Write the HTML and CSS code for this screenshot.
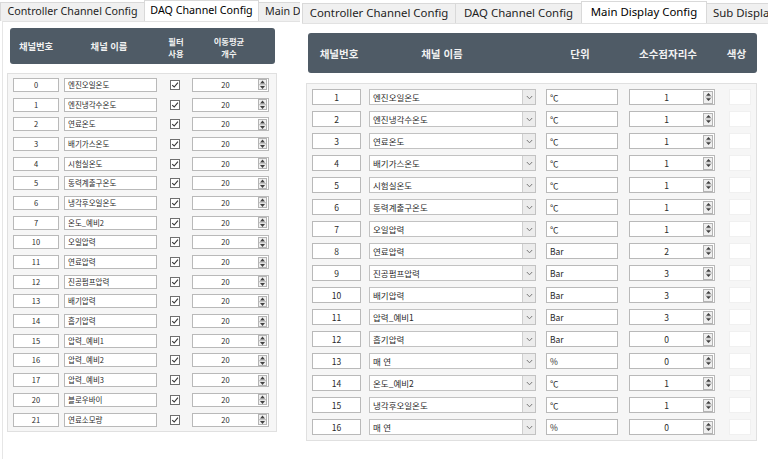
FILE: index.html
```html
<!DOCTYPE html>
<html lang="ko">
<head>
<meta charset="utf-8">
<title>Channel Config</title>
<link rel="stylesheet" href="styles.css">
</head>
<body>
<div class="screen">
  <!-- LEFT: DAQ Channel Config -->
  <section class="panel panel-l">
    <div class="tabs tabs-l">
      <div class="tab tab-l1">Controller Channel Config</div>
      <div class="tab sel tab-l2">DAQ Channel Config</div>
      <div class="tab tab-l3">Main D</div>
    </div>
    <div class="pane pane-l">
      <div class="head head-l">
        <div>채널번호</div>
        <div>채널 이름</div>
        <div class="two">필터<br>사용</div>
        <div class="two">이동평균<br>개수</div>
      </div>
      <div class="table table-l">
        <div class="lrow"><div class="box num-l">0</div><div class="box name-l">엔진오일온도</div><div class="chk-cell"><span class="chk"></span></div><div class="box spin spin-l"><span class="val">20</span><span class="spb"></span></div></div>
        <div class="lrow"><div class="box num-l">1</div><div class="box name-l">엔진냉각수온도</div><div class="chk-cell"><span class="chk"></span></div><div class="box spin spin-l"><span class="val">20</span><span class="spb"></span></div></div>
        <div class="lrow"><div class="box num-l">2</div><div class="box name-l">연료온도</div><div class="chk-cell"><span class="chk"></span></div><div class="box spin spin-l"><span class="val">20</span><span class="spb"></span></div></div>
        <div class="lrow"><div class="box num-l">3</div><div class="box name-l">배기가스온도</div><div class="chk-cell"><span class="chk"></span></div><div class="box spin spin-l"><span class="val">20</span><span class="spb"></span></div></div>
        <div class="lrow"><div class="box num-l">4</div><div class="box name-l">시험실온도</div><div class="chk-cell"><span class="chk"></span></div><div class="box spin spin-l"><span class="val">20</span><span class="spb"></span></div></div>
        <div class="lrow"><div class="box num-l">5</div><div class="box name-l">동력계출구온도</div><div class="chk-cell"><span class="chk"></span></div><div class="box spin spin-l"><span class="val">20</span><span class="spb"></span></div></div>
        <div class="lrow"><div class="box num-l">6</div><div class="box name-l">냉각후오일온도</div><div class="chk-cell"><span class="chk"></span></div><div class="box spin spin-l"><span class="val">20</span><span class="spb"></span></div></div>
        <div class="lrow"><div class="box num-l">7</div><div class="box name-l">온도_예비2</div><div class="chk-cell"><span class="chk"></span></div><div class="box spin spin-l"><span class="val">20</span><span class="spb"></span></div></div>
        <div class="lrow"><div class="box num-l">10</div><div class="box name-l">오일압력</div><div class="chk-cell"><span class="chk"></span></div><div class="box spin spin-l"><span class="val">20</span><span class="spb"></span></div></div>
        <div class="lrow"><div class="box num-l">11</div><div class="box name-l">연료압력</div><div class="chk-cell"><span class="chk"></span></div><div class="box spin spin-l"><span class="val">20</span><span class="spb"></span></div></div>
        <div class="lrow"><div class="box num-l">12</div><div class="box name-l">진공펌프압력</div><div class="chk-cell"><span class="chk"></span></div><div class="box spin spin-l"><span class="val">20</span><span class="spb"></span></div></div>
        <div class="lrow"><div class="box num-l">13</div><div class="box name-l">배기압력</div><div class="chk-cell"><span class="chk"></span></div><div class="box spin spin-l"><span class="val">20</span><span class="spb"></span></div></div>
        <div class="lrow"><div class="box num-l">14</div><div class="box name-l">흡기압력</div><div class="chk-cell"><span class="chk"></span></div><div class="box spin spin-l"><span class="val">20</span><span class="spb"></span></div></div>
        <div class="lrow"><div class="box num-l">15</div><div class="box name-l">압력_예비1</div><div class="chk-cell"><span class="chk"></span></div><div class="box spin spin-l"><span class="val">20</span><span class="spb"></span></div></div>
        <div class="lrow"><div class="box num-l">16</div><div class="box name-l">압력_예비2</div><div class="chk-cell"><span class="chk"></span></div><div class="box spin spin-l"><span class="val">20</span><span class="spb"></span></div></div>
        <div class="lrow"><div class="box num-l">17</div><div class="box name-l">압력_예비3</div><div class="chk-cell"><span class="chk"></span></div><div class="box spin spin-l"><span class="val">20</span><span class="spb"></span></div></div>
        <div class="lrow"><div class="box num-l">20</div><div class="box name-l">블로우바이</div><div class="chk-cell"><span class="chk"></span></div><div class="box spin spin-l"><span class="val">20</span><span class="spb"></span></div></div>
        <div class="lrow"><div class="box num-l">21</div><div class="box name-l">연료소모량</div><div class="chk-cell"><span class="chk"></span></div><div class="box spin spin-l"><span class="val">20</span><span class="spb"></span></div></div>
      </div>
    </div>
  </section>

  <!-- RIGHT: Main Display Config -->
  <section class="panel panel-r">
    <div class="tabs tabs-r">
      <div class="tab tab-r1">Controller Channel Config</div>
      <div class="tab tab-r2">DAQ Channel Config</div>
      <div class="tab sel tab-r3">Main Display Config</div>
      <div class="tab tab-r4">Sub Displa</div>
    </div>
    <div class="pane pane-r">
      <div class="head head-r">
        <div>채널번호</div>
        <div>채널 이름</div>
        <div class="unit-h">단위</div>
        <div>소수점자리수</div>
        <div>색상</div>
      </div>
      <div class="table table-r">
        <div class="rrow"><div class="box num-r">1</div><div class="box combo"><span class="ctext">엔진오일온도</span><span class="dd"></span></div><div class="box unit">℃</div><div class="box spin spin-r"><span class="val">1</span><span class="spb"></span></div><div class="swatch"></div></div>
        <div class="rrow"><div class="box num-r">2</div><div class="box combo"><span class="ctext">엔진냉각수온도</span><span class="dd"></span></div><div class="box unit">℃</div><div class="box spin spin-r"><span class="val">1</span><span class="spb"></span></div><div class="swatch"></div></div>
        <div class="rrow"><div class="box num-r">3</div><div class="box combo"><span class="ctext">연료온도</span><span class="dd"></span></div><div class="box unit">℃</div><div class="box spin spin-r"><span class="val">1</span><span class="spb"></span></div><div class="swatch"></div></div>
        <div class="rrow"><div class="box num-r">4</div><div class="box combo"><span class="ctext">배기가스온도</span><span class="dd"></span></div><div class="box unit">℃</div><div class="box spin spin-r"><span class="val">1</span><span class="spb"></span></div><div class="swatch"></div></div>
        <div class="rrow"><div class="box num-r">5</div><div class="box combo"><span class="ctext">시험실온도</span><span class="dd"></span></div><div class="box unit">℃</div><div class="box spin spin-r"><span class="val">1</span><span class="spb"></span></div><div class="swatch"></div></div>
        <div class="rrow"><div class="box num-r">6</div><div class="box combo"><span class="ctext">동력계출구온도</span><span class="dd"></span></div><div class="box unit">℃</div><div class="box spin spin-r"><span class="val">1</span><span class="spb"></span></div><div class="swatch"></div></div>
        <div class="rrow"><div class="box num-r">7</div><div class="box combo"><span class="ctext">오일압력</span><span class="dd"></span></div><div class="box unit">℃</div><div class="box spin spin-r"><span class="val">1</span><span class="spb"></span></div><div class="swatch"></div></div>
        <div class="rrow"><div class="box num-r">8</div><div class="box combo"><span class="ctext">연료압력</span><span class="dd"></span></div><div class="box unit">Bar</div><div class="box spin spin-r"><span class="val">2</span><span class="spb"></span></div><div class="swatch"></div></div>
        <div class="rrow"><div class="box num-r">9</div><div class="box combo"><span class="ctext">진공펌프압력</span><span class="dd"></span></div><div class="box unit">Bar</div><div class="box spin spin-r"><span class="val">3</span><span class="spb"></span></div><div class="swatch"></div></div>
        <div class="rrow"><div class="box num-r">10</div><div class="box combo"><span class="ctext">배기압력</span><span class="dd"></span></div><div class="box unit">Bar</div><div class="box spin spin-r"><span class="val">3</span><span class="spb"></span></div><div class="swatch"></div></div>
        <div class="rrow"><div class="box num-r">11</div><div class="box combo"><span class="ctext">압력_예비1</span><span class="dd"></span></div><div class="box unit">Bar</div><div class="box spin spin-r"><span class="val">3</span><span class="spb"></span></div><div class="swatch"></div></div>
        <div class="rrow"><div class="box num-r">12</div><div class="box combo"><span class="ctext">흡기압력</span><span class="dd"></span></div><div class="box unit">Bar</div><div class="box spin spin-r"><span class="val">0</span><span class="spb"></span></div><div class="swatch"></div></div>
        <div class="rrow"><div class="box num-r">13</div><div class="box combo"><span class="ctext">매 연</span><span class="dd"></span></div><div class="box unit">%</div><div class="box spin spin-r"><span class="val">0</span><span class="spb"></span></div><div class="swatch"></div></div>
        <div class="rrow"><div class="box num-r">14</div><div class="box combo"><span class="ctext">온도_예비2</span><span class="dd"></span></div><div class="box unit">℃</div><div class="box spin spin-r"><span class="val">1</span><span class="spb"></span></div><div class="swatch"></div></div>
        <div class="rrow"><div class="box num-r">15</div><div class="box combo"><span class="ctext">냉각후오일온도</span><span class="dd"></span></div><div class="box unit">℃</div><div class="box spin spin-r"><span class="val">1</span><span class="spb"></span></div><div class="swatch"></div></div>
        <div class="rrow"><div class="box num-r">16</div><div class="box combo"><span class="ctext">매 연</span><span class="dd"></span></div><div class="box unit">%</div><div class="box spin spin-r"><span class="val">0</span><span class="spb"></span></div><div class="swatch"></div></div>
      </div>
    </div>
  </section>
</div>
</body>
</html>
```

FILE: styles.css
```css
html, body {
  margin: 0;
  padding: 0;
  background: #ffffff;
}
body {
  width: 768px;
  height: 459px;
  overflow: hidden;
  font-family: "Noto Sans", "Noto Sans CJK KR", sans-serif;
  color: #222;
}
.screen {
  display: flex;
  align-items: flex-start;
  height: 459px;
}
.panel {
  display: flex;
  flex-direction: column;
  overflow: hidden;
  height: 459px;
}
.panel-l { width: 300px; flex: none; }
.panel-r { width: 466px; flex: none; margin-left: 2px; }

/* ---------- tabs ---------- */
.tabs {
  display: flex;
  align-items: flex-end;
  flex: none;
  white-space: nowrap;
}
.tab {
  box-sizing: border-box;
  flex: none;
  background: #f0f0f0;
  border: 1px solid #d9d9d9;
  border-bottom: none;
  color: #1e1e1e;
  text-align: center;
  overflow: hidden;
}
.tab.sel {
  background: #ffffff;
  color: #000;
}
.tabs-l { height: 21px; font-size: 10.7px; }
.tabs-l .tab { height: 19px; line-height: 17px; }
.tabs-l .tab.sel { height: 21px; line-height: 19px; }
.tab-l1 { width: 145px; }
.tab-l2 { width: 115px; margin-left: -1px; }
.tab-l3 { width: 42px; margin-left: -1px; text-align: left; padding-left: 6px; border-right: none; }

.tabs-r { height: 23px; font-size: 11.4px; }
.tabs-r .tab { height: 20px; line-height: 18px; }
.tabs-r .tab.sel { height: 22px; line-height: 20px; }
.tab-r1 { width: 154px; }
.tab-r2 { width: 127px; margin-left: -1px; }
.tab-r3 { width: 126px; margin-left: -1px; }
.tab-r4 { width: 62px; margin-left: -1px; text-align: left; padding-left: 6px; border-right: none; }

/* ---------- panes ---------- */
.pane {
  flex: 1;
  box-sizing: border-box;
  border-top: 1px solid #e2e2e2;
  font-family: "Noto Sans CJK KR", "Noto Sans", sans-serif;
}
.pane-l {
  margin-left: 2px;
  border-left: 1px solid #e6e6e6;
  padding-top: 6px;
}
.pane-r {
  padding-top: 9px;
}

/* header bars */
.head {
  display: grid;
  align-items: center;
  background: #4f5b66;
  color: #f2f2f2;
  font-weight: bold;
  border-radius: 3px;
  text-align: center;
}
.head-l {
  margin-left: 7px;
  width: 265px;
  height: 36px;
  font-size: 9.3px;
  line-height: 14px;
  grid-template-columns: 52px 94px 40px 66px 1fr;
}
.head-l .two { font-size: 8.3px; line-height: 12px; padding-top: 1px; }
.head-r {
  margin-left: 6px;
  width: 449px;
  height: 40px;
  font-size: 10.5px;
  grid-template-columns: 62px 144px 106px 96px 1fr;
}
.head-r .unit-h { padding-left: 26px; box-sizing: border-box; }

/* tables */
.table {
  box-sizing: border-box;
  border: 1px solid #e0e0e0;
  background: #f6f6f6;
}
.table-l {
  margin-left: 4px;
  margin-top: 9px;
  width: 270px;
  padding: 1px 0 2px;
}
.table-r {
  margin-left: 4px;
  margin-top: 10px;
  width: 451px;
  padding: 2px 0;
}

.box {
  box-sizing: border-box;
  flex: none;
  background: #fff;
  border: 1px solid #b9b9b9;
  color: #2a2a2a;
  white-space: nowrap;
  overflow: hidden;
}

/* left rows */
.lrow {
  display: flex;
  align-items: center;
  height: 19.7px;
  padding-left: 5px;
  font-size: 7.5px;
}
.lrow .box { height: 14px; line-height: 12px; }
.num-l { width: 46px; text-align: center; }
.name-l { width: 93px; margin-left: 5px; padding-left: 3px; }
.chk-cell {
  width: 35px;
  flex: none;
  display: flex;
  justify-content: center;
}
.chk {
  display: block;
  width: 10px;
  height: 10px;
  box-sizing: border-box;
  border: 1px solid #6f6f6f;
  background: #fff url("data:image/svg+xml;utf8,<svg xmlns='http://www.w3.org/2000/svg' width='8' height='8' viewBox='0 0 8 8'><path d='M1.2 4.1 L3.2 6 L6.9 1.6' fill='none' stroke='%23333' stroke-width='1.1'/></svg>") center / 8px 8px no-repeat;
}
.spin {
  display: flex;
  align-items: center;
}
.spin .val {
  flex: 1;
  text-align: center;
}
.spin .spb {
  flex: none;
  box-sizing: border-box;
  border: 1px solid #b4b4b4;
  background: #f0f0f0 url("data:image/svg+xml;utf8,<svg xmlns='http://www.w3.org/2000/svg' width='7' height='10' viewBox='0 0 7 10'><path d='M3.5 1 L6 3.8 H1Z' fill='%23404040'/><path d='M0 5 H7' stroke='%23b4b4b4' stroke-width='1'/><path d='M1 6.2 H6 L3.5 9Z' fill='%23404040'/></svg>") center / 7px 10px no-repeat;
}
.spin-l { width: 77px; }
.spin-l .spb { width: 9px; height: 11px; margin-right: 1px; }

/* right rows */
.rrow {
  display: flex;
  align-items: center;
  height: 22px;
  padding-left: 5px;
  font-size: 8.5px;
}
.rrow .box { height: 16px; line-height: 14px; }
.num-r { width: 49px; text-align: center; }
.combo {
  width: 167px;
  margin-left: 8px;
  display: flex;
  align-items: center;
  border-color: #c2c2c2;
}
.combo .ctext { flex: 1; padding-left: 3px; }
.combo .dd {
  flex: none;
  width: 13px;
  height: 14px;
  box-sizing: border-box;
  border-left: 1px solid #cfcfcf;
  background: #ececec url("data:image/svg+xml;utf8,<svg xmlns='http://www.w3.org/2000/svg' width='7' height='5' viewBox='0 0 7 5'><path d='M0.8 1 L3.5 3.8 L6.2 1' fill='none' stroke='%23777' stroke-width='1'/></svg>") center / 7px 5px no-repeat;
}
.unit { width: 72px; margin-left: 10px; padding-left: 3px; }
.spin-r { width: 86px; margin-left: 11px; }
.spin-r .spb { width: 10px; height: 13px; margin-right: 1px; }
.swatch {
  flex: none;
  width: 22px;
  height: 16px;
  margin-left: 14px;
  background: #fff;
  border: 1px solid #f0f0f0;
  box-sizing: border-box;
}
```
